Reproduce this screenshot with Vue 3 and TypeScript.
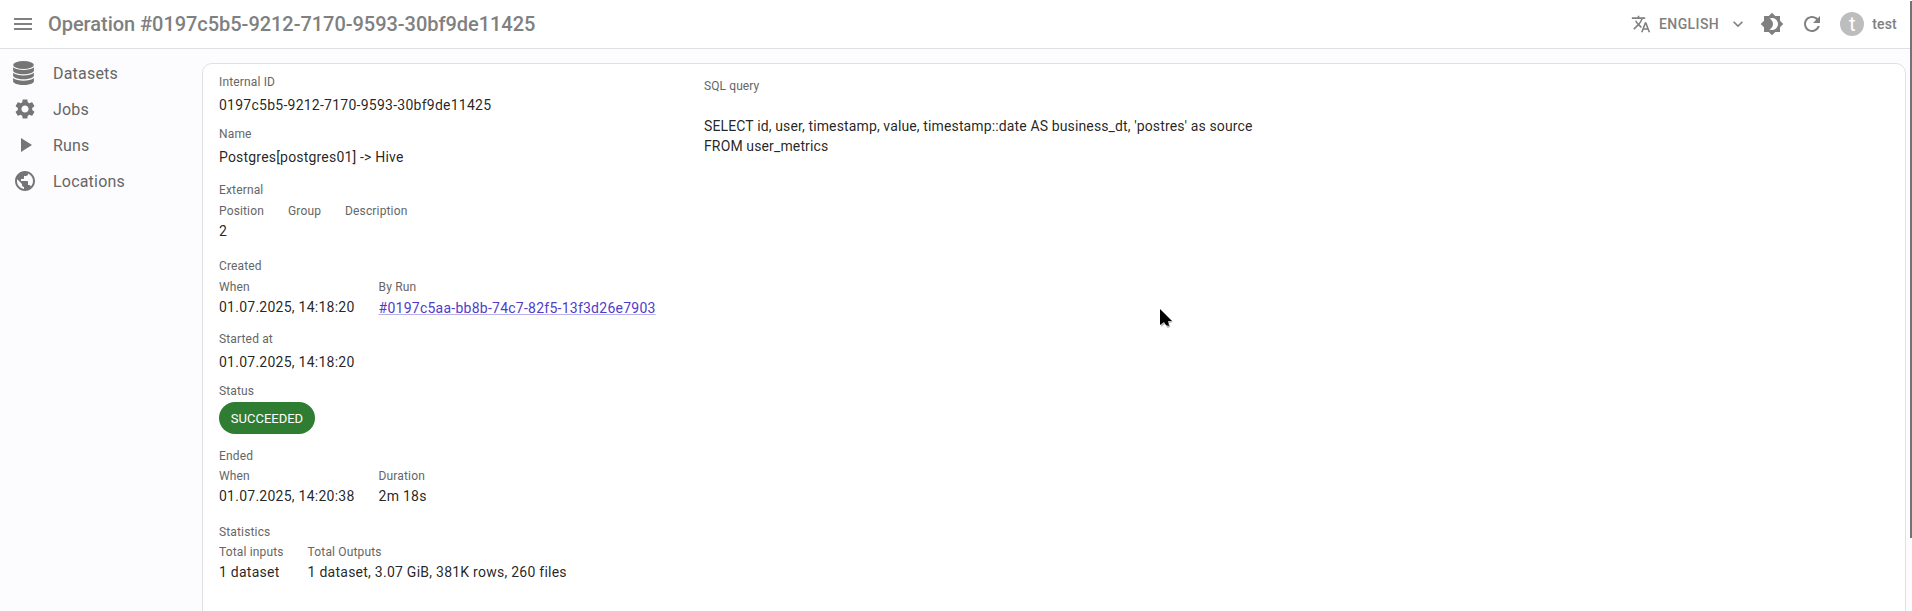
<script setup lang="ts">
interface Entry { label: string; value: string; link?: boolean }
interface Group { kind: 'field' | 'group' | 'status'; title: string; value?: string; cls: string; items?: Entry[] }

const menu = [
  { id: 'datasets', label: 'Datasets' },
  { id: 'jobs', label: 'Jobs' },
  { id: 'runs', label: 'Runs' },
  { id: 'locations', label: 'Locations' },
]

const groups: Group[] = [
  { kind: 'field', title: 'Internal ID', value: '0197c5b5-9212-7170-9593-30bf9de11425', cls: 'internal' },
  { kind: 'field', title: 'Name', value: 'Postgres[postgres01] -> Hive', cls: 'name' },
  {
    kind: 'group', title: 'External', cls: 'external',
    items: [{ label: 'Position', value: '2' }, { label: 'Group', value: '' }, { label: 'Description', value: '' }],
  },
  {
    kind: 'group', title: 'Created', cls: 'created',
    items: [
      { label: 'When', value: '01.07.2025, 14:18:20' },
      { label: 'By Run', value: '#0197c5aa-bb8b-74c7-82f5-13f3d26e7903', link: true },
    ],
  },
  { kind: 'field', title: 'Started at', value: '01.07.2025, 14:18:20', cls: 'started' },
  { kind: 'status', title: 'Status', value: 'SUCCEEDED', cls: 'status' },
  {
    kind: 'group', title: 'Ended', cls: 'ended',
    items: [{ label: 'When', value: '01.07.2025, 14:20:38' }, { label: 'Duration', value: '2m 18s' }],
  },
  {
    kind: 'group', title: 'Statistics', cls: 'statistics',
    items: [{ label: 'Total inputs', value: '1 dataset' }, { label: 'Total Outputs', value: '1 dataset, 3.07 GiB, 381K rows, 260 files' }],
  },
]

const sql = "SELECT id, user, timestamp, value, timestamp::date AS business_dt, 'postres' as source\nFROM user_metrics"
</script>

<template>
  <div class="app">
    <header class="bar">
      <svg class="burger" viewBox="0 0 24 24"><path d="M3 18h18v-2H3zm0-5h18v-2H3zm0-7v2h18V6z" /></svg>
      <h1>Operation #0197c5b5-9212-7170-9593-30bf9de11425</h1>
      <div class="tools">
        <svg class="i-lang" viewBox="0 0 24 24"><path d="m12.87 15.07-2.54-2.51.03-.03c1.74-1.94 2.98-4.17 3.71-6.53H17V4h-7V2H8v2H1v1.99h11.17C11.5 7.92 10.44 9.75 9 11.35 8.07 10.32 7.3 9.19 6.69 8h-2c.73 1.63 1.73 3.17 2.98 4.56l-5.09 5.02L4 19l5-5 3.11 3.11zM18.5 10h-2L12 22h2l1.12-3h4.75L21 22h2zm-2.62 7 1.62-4.33L19.12 17z" /></svg>
        <span class="lang">ENGLISH</span>
        <svg class="i-chev" viewBox="0 0 24 24"><path d="M16.59 8.59 12 13.17 7.41 8.59 6 10l6 6 6-6z" /></svg>
        <svg class="i-theme" viewBox="0 0 24 24"><path d="M20 8.69V4h-4.69L12 .69 8.69 4H4v4.69L.69 12 4 15.31V20h4.69L12 23.31 15.31 20H20v-4.69L23.31 12zM12 18c-.89 0-1.74-.2-2.5-.55C11.56 16.5 13 14.42 13 12s-1.44-4.5-3.5-5.45C10.26 6.2 11.11 6 12 6c3.31 0 6 2.69 6 6s-2.69 6-6 6z" /></svg>
        <svg class="i-refresh" viewBox="0 0 24 24"><path d="M17.65 6.35C16.2 4.9 14.21 4 12 4c-4.42 0-7.99 3.58-7.99 8s3.57 8 7.99 8c3.73 0 6.84-2.55 7.73-6h-2.08c-.82 2.33-3.04 4-5.65 4-3.31 0-6-2.69-6-6s2.69-6 6-6c1.66 0 3.14.69 4.22 1.78L13 11h7V4z" /></svg>
        <span class="avatar">t</span>
        <span class="user">test</span>
      </div>
    </header>
    <div class="body">
      <nav>
        <a v-for="m in menu" :key="m.id">
          <svg v-if="m.id === 'datasets'" class="db" viewBox="0 0 20 24" preserveAspectRatio="none">
            <ellipse cx="10" cy="4" rx="9.9" ry="4" />
            <path d="M.1 6.2c2 2 6 2.7 9.9 2.7s7.900-.7 9.900-2.700v3.300c0 2.100-4.300 3.700-9.900 3.700S.1 11.600.1 9.500z" />
            <path d="M.1 11.700c2 2 6 2.700 9.900 2.700s7.900-.7 9.900-2.700v2.800c0 2.100-4.300 3.700-9.900 3.700S.1 16.600.1 14.500z" />
            <path d="M.1 17c2 2 6 2.700 9.900 2.700s7.900-.7 9.900-2.700v3.300c0 2.100-4.300 3.700-9.900 3.700S.1 22.400.1 20.300z" />
          </svg>
          <svg v-else-if="m.id === 'jobs'" class="nav-icon" viewBox="0 0 24 24"><path d="M19.14 12.94c.04-.3.06-.61.06-.94 0-.32-.02-.64-.07-.94l2.030-1.580c.18-.14.23-.41.12-.61l-1.920-3.320c-.12-.22-.37-.29-.59-.22l-2.390.96c-.5-.38-1.030-.7-1.620-.94l-.36-2.540c-.04-.24-.24-.41-.48-.41h-3.840c-.24 0-.43.17-.47.41l-.36 2.540c-.59.24-1.130.57-1.620.94l-2.390-.96c-.22-.08-.47 0-.59.22L2.740 8.870c-.12.21-.08.47.12.61l2.030 1.580c-.05.3-.09.63-.09.94s.02.64.07.94l-2.030 1.580c-.18.14-.23.41-.12.61l1.920 3.320c.12.22.37.29.59.22l2.390-.96c.5.38 1.030.7 1.620.94l.36 2.540c.05.24.24.41.48.41h3.840c.24 0 .44-.17.47-.41l.36-2.540c.59-.24 1.130-.56 1.620-.94l2.390.96c.22.08.47 0 .59-.22l1.920-3.320c.12-.22.07-.47-.12-.61zM12 15.600c-1.980 0-3.600-1.620-3.600-3.600s1.620-3.600 3.600-3.600 3.600 1.620 3.600 3.600-1.620 3.600-3.600 3.600" /></svg>
          <svg v-else-if="m.id === 'runs'" class="nav-icon" viewBox="0 0 24 24"><path d="M8 5v14l11-7z" /></svg>
          <svg v-else class="nav-icon" viewBox="0 0 24 24"><path d="M12 2C6.480 2 2 6.480 2 12s4.480 10 10 10 10-4.480 10-10S17.520 2 12 2m-1 17.930c-3.950-.49-7-3.850-7-7.930 0-.62.08-1.210.21-1.790L9 15v1c0 1.100.9 2 2 2zm6.900-2.540c-.26-.81-1-1.390-1.900-1.390h-1v-3c0-.55-.45-1-1-1H8v-2h2c.55 0 1-.45 1-1V7h2c1.100 0 2-.9 2-2v-.41c2.930 1.190 5 4.060 5 7.410 0 2.080-.8 3.970-2.100 5.390" /></svg>
          <span>{{ m.label }}</span>
        </a>
      </nav>
      <main class="card">
        <section class="details">
          <div v-for="g in groups" :key="g.title" class="block" :class="[g.kind, g.cls]">
            <div class="label">{{ g.title }}</div>
            <div v-if="g.kind === 'field'" class="value">{{ g.value }}</div>
            <div v-else-if="g.kind === 'status'" class="chip">{{ g.value }}</div>
            <div v-else class="row">
              <div v-for="e in g.items" :key="e.label">
                <div class="label">{{ e.label }}</div>
                <div class="value"><a v-if="e.link" class="link">{{ e.value }}</a><template v-else>{{ e.value }}</template></div>
              </div>
            </div>
          </div>
        </section>
        <section class="query">
          <div class="label">SQL query</div>
          <pre>{{ sql }}</pre>
        </section>
      </main>
    </div>
    <div class="thumb"></div>
    <svg class="cursor" viewBox="0 0 14 22"><path d="M1 1v17l4-3 2.500 4 3-1-1.500-4 4-1z" fill="#bbb" /><path d="M0 0v16l4-3 2 3 3 1-1-5h4z" fill="#000" /></svg>
  </div>
</template>

<style>
html, body { margin: 0; overflow: hidden; }
</style>

<style scoped>
.app { position: relative; height: 611px; overflow: hidden; display: flex; flex-direction: column; background: #fcfcfe; font-family: Roboto, sans-serif; color: rgba(0, 0, 0, 0.87); }
svg { display: block; flex: none; fill: currentColor; }
.bar { height: 48px; flex: none; display: flex; align-items: center; background: #fff; border-bottom: 1px solid #e0e0e3; color: #808080; }
.burger { width: 24px; height: 24px; margin-left: 11px; }
h1 { margin: 0 0 0 13px; font-size: 20px; font-weight: 500; line-height: 32px; letter-spacing: -0.04px; }
.tools { margin-left: auto; margin-right: 15px; display: flex; align-items: center; }
.i-lang { width: 20px; height: 20px; }
.lang { margin-left: 8px; font-size: 14px; font-weight: 500; letter-spacing: 0.4px; }
.i-chev { width: 20px; height: 20px; margin-left: 9px; }
.i-theme { width: 24px; height: 24px; margin-left: 12px; }
.i-refresh { width: 24px; height: 24px; margin-left: 16px; }
.avatar { width: 24px; height: 24px; margin-left: 16px; border-radius: 50%; background: #bdbdbd; color: #fff; font-size: 20px; line-height: 24px; text-align: center; }
.user { margin-left: 8px; font-size: 14px; font-weight: 500; letter-spacing: 0.2px; }
.body { flex: 1; display: flex; min-height: 0; }
nav { width: 202px; flex: none; padding-top: 6px; }
nav a { display: flex; align-items: center; height: 36px; color: #666; font-size: 16px; letter-spacing: 0.2px; }
nav svg { color: #757575; }
.nav-icon { width: 24px; height: 24px; margin: 0 16px 0 13px; }
.db { width: 21px; height: 24px; margin: 0 19px 0 13px; }
nav a span { line-height: 24px; padding-top: 2px; }
.card { flex: 1; margin: 14px 6px 0 0; height: 700px; box-sizing: border-box; display: flex; background: #fff; border: 1px solid #e0e0e3; border-radius: 10px; }
.details { width: 485px; flex: none; padding: 10px 0 0 16px; box-sizing: border-box; }
.label { font-size: 12px; line-height: 16px; height: 16px; letter-spacing: 0.15px; color: #666; white-space: nowrap; }
.value { font-size: 14px; line-height: 20px; height: 20px; letter-spacing: 0.25px; white-space: nowrap; }
.name .value { letter-spacing: 0.19px; }
.field > .value { margin-top: 5px; }
.row { display: flex; gap: 24px; margin-top: 5px; }
.row .value { margin-top: 2px; }
.name, .status { margin-top: 11px; }
.external { margin-top: 15px; }
.created { margin-top: 17px; }
.started, .ended { margin-top: 14px; }
.statistics { margin-top: 18px; }
.ended .row, .statistics .row { margin-top: 4px; }
.chip { width: 96px; height: 32px; margin-top: 3px; border-radius: 16px; background: #2e7d32; color: #fff; font-size: 13px; line-height: 33px; text-align: center; }
.link { display: inline-block; line-height: 20px; padding-top: 1px; color: #4f3cc9; text-decoration: underline; text-decoration-color: rgba(79, 60, 201, 0.4); }
.query { padding: 14px 0 0 16px; }
.query .label { letter-spacing: 0.1px; }
pre { margin: 22px 0 0; font: 14px/20px Roboto, sans-serif; letter-spacing: 0.13px; }
.thumb { position: absolute; right: 0; top: 1px; width: 2px; height: 537px; background: #6f7478; }
.cursor { position: absolute; left: 1160px; top: 309px; width: 14px; height: 22px; }
</style>
